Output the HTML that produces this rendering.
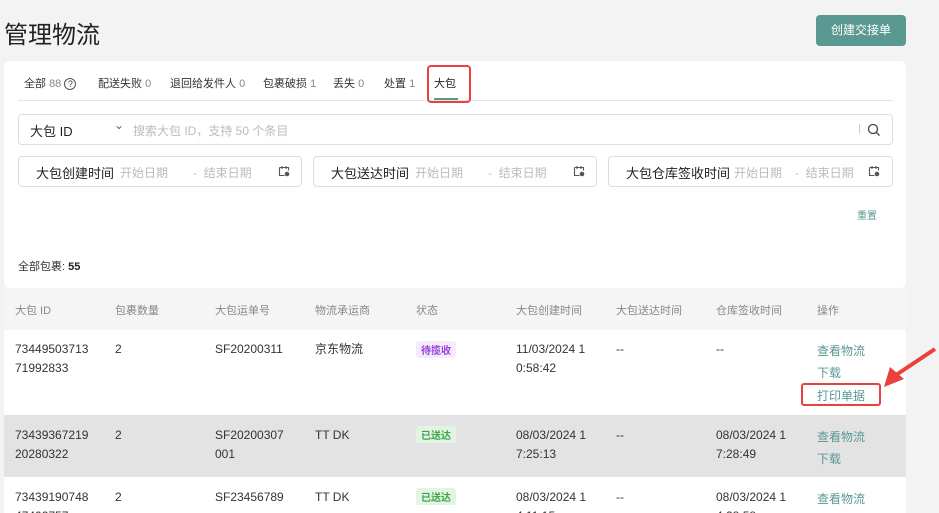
<!DOCTYPE html>
<html><head><meta charset="utf-8"><style>
*{margin:0;padding:0;box-sizing:border-box}
html,body{width:939px;height:513px;overflow:hidden}
body{background:#f3f3f3;font-family:"Liberation Sans","Noto Sans CJK SC",sans-serif;color:#222;position:relative}
.a{position:absolute;white-space:nowrap}
.box{position:absolute;border:1px solid #ddd;border-radius:4px;background:#fff}
.ph{color:#bbb;font-size:12px}
.lbl{font-size:13px;color:#222}
.h{font-size:11px;color:#888}
.t{font-size:12px;color:#333;line-height:19px}
.lk{font-size:12px;color:#5a9892}
.tag{position:absolute;font-size:10px;padding:1px 5px;border-radius:3px;font-weight:bold}
</style></head><body>
<div class="a" style="left:4px;top:15px;font-size:24px;color:#222">管理物流</div>
<div class="a" style="left:816px;top:15px;width:90px;height:31px;background:#5a9892;border-radius:4px;color:#fff;font-size:12px;line-height:31px;text-align:center">创建交接单</div>

<div class="a" style="left:4px;top:61px;width:902px;height:227px;background:#fff;border-radius:6px"></div>
<div class="a" style="left:24px;top:75px;font-size:11px;color:#333">全部 <span style="color:#888">88</span> <span style="display:inline-block;width:12px;height:12px;border:1px solid #555;border-radius:50%;font-size:9px;text-align:center;line-height:10px">?</span></div>
<div class="a" style="left:98px;top:75px;font-size:11px;color:#333">配送失败 <span style="color:#888">0</span></div>
<div class="a" style="left:170px;top:75px;font-size:11px;color:#333">退回给发件人 <span style="color:#888">0</span></div>
<div class="a" style="left:263px;top:75px;font-size:11px;color:#333">包裹破损 <span style="color:#888">1</span></div>
<div class="a" style="left:333px;top:75px;font-size:11px;color:#333">丢失 <span style="color:#888">0</span></div>
<div class="a" style="left:384px;top:75px;font-size:11px;color:#333">处置 <span style="color:#888">1</span></div>
<div class="a" style="left:434px;top:75px;font-size:11px;color:#222">大包</div>
<div class="a" style="left:434px;top:98px;width:24px;height:2px;background:#5a9892"></div>
<div class="a" style="left:18px;top:100px;width:875px;height:1px;background:#e6e6e6"></div>
<div class="a" style="left:427px;top:65px;width:44px;height:38px;border:2px solid #e8413e;border-radius:4px"></div>

<div class="box" style="left:18px;top:114px;width:875px;height:31px"></div>
<div class="a lbl" style="left:30px;top:121px">大包 ID</div>
<div class="a" style="left:114px;top:118px;font-size:12px;color:#666">⌄</div>
<div class="a ph" style="left:133px;top:122px">搜索大包 ID，支持 50 个条目</div>
<div class="a" style="left:859px;top:124px;width:1px;height:10px;background:#ccc"></div>
<svg class="a" style="left:867px;top:123px" width="14" height="14" viewBox="0 0 14 14"><circle cx="6" cy="6" r="4.5" fill="none" stroke="#444" stroke-width="1.3"/><path d="M9.3 9.3L12.5 12.5" stroke="#444" stroke-width="1.3"/></svg>

<div class="box" style="left:18px;top:156px;width:284px;height:31px"></div>
<div class="a lbl" style="left:36px;top:163px">大包创建时间</div>
<div class="a ph" style="left:120px;top:164px">开始日期</div>
<div class="a ph" style="left:193px;top:164px">-&nbsp; 结束日期</div>
<div class="box" style="left:313px;top:156px;width:284px;height:31px"></div>
<div class="a lbl" style="left:331px;top:163px">大包送达时间</div>
<div class="a ph" style="left:415px;top:164px">开始日期</div>
<div class="a ph" style="left:488px;top:164px">-&nbsp; 结束日期</div>
<div class="box" style="left:608px;top:156px;width:285px;height:31px"></div>
<div class="a lbl" style="left:626px;top:163px">大包仓库签收时间</div>
<div class="a ph" style="left:734px;top:164px">开始日期</div>
<div class="a ph" style="left:795px;top:164px">-&nbsp; 结束日期</div>
<svg class="a" style="left:278px;top:165px" width="12" height="12" viewBox="0 0 12 12"><path d="M1.5 2.5h9v3M1.5 2.5v8h5M4 1v3M8 1v3" fill="none" stroke="#555" stroke-width="1.1"/><circle cx="9" cy="9" r="2.3" fill="#555"/></svg>
<svg class="a" style="left:573px;top:165px" width="12" height="12" viewBox="0 0 12 12"><path d="M1.5 2.5h9v3M1.5 2.5v8h5M4 1v3M8 1v3" fill="none" stroke="#555" stroke-width="1.1"/><circle cx="9" cy="9" r="2.3" fill="#555"/></svg>
<svg class="a" style="left:868px;top:165px" width="12" height="12" viewBox="0 0 12 12"><path d="M1.5 2.5h9v3M1.5 2.5v8h5M4 1v3M8 1v3" fill="none" stroke="#555" stroke-width="1.1"/><circle cx="9" cy="9" r="2.3" fill="#555"/></svg>
<div class="a" style="left:857px;top:207px;font-size:10px;color:#5a9892">重置</div>
<div class="a" style="left:18px;top:258px;font-size:11px;color:#333">全部包裹: <b style="color:#222">55</b></div>

<div class="a" style="left:4px;top:288px;width:902px;height:42px;background:#f5f5f5"></div>
<div class="a" style="left:4px;top:330px;width:902px;height:85px;background:#fff"></div>
<div class="a" style="left:4px;top:415px;width:902px;height:62px;background:#e3e3e3"></div>
<div class="a" style="left:4px;top:477px;width:902px;height:36px;background:#fff"></div>

<div class="a h" style="left:15px;top:302px">大包 ID</div>
<div class="a h" style="left:115px;top:302px">包裹数量</div>
<div class="a h" style="left:215px;top:302px">大包运单号</div>
<div class="a h" style="left:315px;top:302px">物流承运商</div>
<div class="a h" style="left:416px;top:302px">状态</div>
<div class="a h" style="left:516px;top:302px">大包创建时间</div>
<div class="a h" style="left:616px;top:302px">大包送达时间</div>
<div class="a h" style="left:716px;top:302px">仓库签收时间</div>
<div class="a h" style="left:817px;top:302px">操作</div>

<div class="a t" style="left:15px;top:340px">73449503713<br>71992833</div>
<div class="a t" style="left:115px;top:340px">2</div>
<div class="a t" style="left:215px;top:340px">SF20200311</div>
<div class="a t" style="left:315px;top:340px">京东物流</div>
<div class="tag" style="left:416px;top:341px;background:#f4ecfd;color:#9a3fd6">待揽收</div>
<div class="a t" style="left:516px;top:340px">11/03/2024 1<br>0:58:42</div>
<div class="a t" style="left:616px;top:340px">--</div>
<div class="a t" style="left:716px;top:340px">--</div>
<div class="a lk" style="left:817px;top:342px">查看物流</div>
<div class="a lk" style="left:817px;top:364px">下载</div>
<div class="a lk" style="left:817px;top:387px">打印单据</div>
<div class="a" style="left:801px;top:383px;width:80px;height:23px;border:2px solid #e8413e;border-radius:3px"></div>
<svg class="a" style="left:880px;top:345px" width="59" height="50" viewBox="0 0 59 50"><path d="M55 4L16 30" stroke="#e8413e" stroke-width="4"/><path d="M4 42L10 22L24 34Z" fill="#e8413e"/></svg>

<div class="a t" style="left:15px;top:426px">73439367219<br>20280322</div>
<div class="a t" style="left:115px;top:426px">2</div>
<div class="a t" style="left:215px;top:426px">SF20200307<br>001</div>
<div class="a t" style="left:315px;top:426px">TT DK</div>
<div class="tag" style="left:416px;top:426px;background:#e4f4e4;color:#3aa54a">已送达</div>
<div class="a t" style="left:516px;top:426px">08/03/2024 1<br>7:25:13</div>
<div class="a t" style="left:616px;top:426px">--</div>
<div class="a t" style="left:716px;top:426px">08/03/2024 1<br>7:28:49</div>
<div class="a lk" style="left:817px;top:428px">查看物流</div>
<div class="a lk" style="left:817px;top:450px">下载</div>

<div class="a t" style="left:15px;top:488px">73439190748<br>47402757</div>
<div class="a t" style="left:115px;top:488px">2</div>
<div class="a t" style="left:215px;top:488px">SF23456789</div>
<div class="a t" style="left:315px;top:488px">TT DK</div>
<div class="tag" style="left:416px;top:488px;background:#e4f4e4;color:#3aa54a">已送达</div>
<div class="a t" style="left:516px;top:488px">08/03/2024 1<br>4:11:15</div>
<div class="a t" style="left:616px;top:488px">--</div>
<div class="a t" style="left:716px;top:488px">08/03/2024 1<br>4:28:58</div>
<div class="a lk" style="left:817px;top:490px">查看物流</div>
</body></html>
